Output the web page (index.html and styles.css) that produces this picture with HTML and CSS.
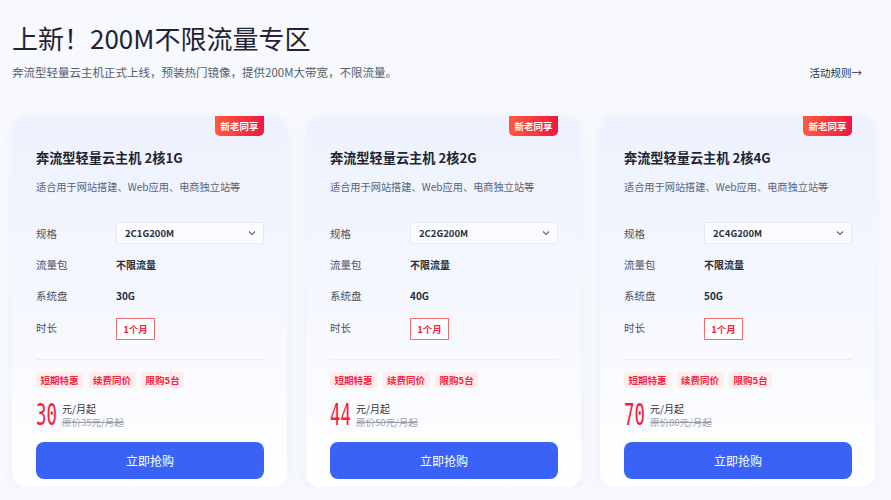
FILE: index.html
```html
<!DOCTYPE html>
<html lang="zh-CN">
<head>
    <meta charset="UTF-8">
    <meta name="viewport" content="width=device-width, initial-scale=1.0">
    <title>上新！200M不限流量专区</title>
    <link rel="stylesheet" href="styles.css">
</head>
<body>

<div class="page">
    <h1>上新！200M不限流量专区</h1>
    <div class="intro">
        <p class="description">奔流型轻量云主机正式上线，预装热门镜像，提供200M大带宽，不限流量。</p>
        <a class="rules" href="#">活动规则→</a>
    </div>

    <div class="cards">
        <!-- 2核1G -->
        <div class="card">
            <span class="badge">新老同享</span>
            <h2>奔流型轻量云主机 2核1G</h2>
            <p class="card-desc">适合用于网站搭建、Web应用、电商独立站等</p>
            <div class="specs">
                <span class="label">规格</span>
                <div class="select">2C1G200M
                    <svg width="8" height="6" viewBox="0 0 8 6"><polyline points="1,1.5 4,4.5 7,1.5" fill="none" stroke="#666" stroke-width="1.1"/></svg>
                </div>
                <span class="label">流量包</span>
                <span class="value">不限流量</span>
                <span class="label">系统盘</span>
                <span class="value">30G</span>
                <span class="label">时长</span>
                <div><span class="duration">1个月</span></div>
            </div>
            <div class="tags">
                <span class="tag">短期特惠</span>
                <span class="tag">续费同价</span>
                <span class="tag">限购5台</span>
            </div>
            <div class="price">
                <span class="amount"><span>30</span></span>
                <div class="price-text">
                    <span class="unit">元/月起</span>
                    <span class="origin">原价35元/月起</span>
                </div>
            </div>
            <button>立即抢购</button>
        </div>

        <!-- 2核2G -->
        <div class="card">
            <span class="badge">新老同享</span>
            <h2>奔流型轻量云主机 2核2G</h2>
            <p class="card-desc">适合用于网站搭建、Web应用、电商独立站等</p>
            <div class="specs">
                <span class="label">规格</span>
                <div class="select">2C2G200M
                    <svg width="8" height="6" viewBox="0 0 8 6"><polyline points="1,1.5 4,4.5 7,1.5" fill="none" stroke="#666" stroke-width="1.1"/></svg>
                </div>
                <span class="label">流量包</span>
                <span class="value">不限流量</span>
                <span class="label">系统盘</span>
                <span class="value">40G</span>
                <span class="label">时长</span>
                <div><span class="duration">1个月</span></div>
            </div>
            <div class="tags">
                <span class="tag">短期特惠</span>
                <span class="tag">续费同价</span>
                <span class="tag">限购5台</span>
            </div>
            <div class="price">
                <span class="amount"><span>44</span></span>
                <div class="price-text">
                    <span class="unit">元/月起</span>
                    <span class="origin">原价50元/月起</span>
                </div>
            </div>
            <button>立即抢购</button>
        </div>

        <!-- 2核4G -->
        <div class="card">
            <span class="badge">新老同享</span>
            <h2>奔流型轻量云主机 2核4G</h2>
            <p class="card-desc">适合用于网站搭建、Web应用、电商独立站等</p>
            <div class="specs">
                <span class="label">规格</span>
                <div class="select">2C4G200M
                    <svg width="8" height="6" viewBox="0 0 8 6"><polyline points="1,1.5 4,4.5 7,1.5" fill="none" stroke="#666" stroke-width="1.1"/></svg>
                </div>
                <span class="label">流量包</span>
                <span class="value">不限流量</span>
                <span class="label">系统盘</span>
                <span class="value">50G</span>
                <span class="label">时长</span>
                <div><span class="duration">1个月</span></div>
            </div>
            <div class="tags">
                <span class="tag">短期特惠</span>
                <span class="tag">续费同价</span>
                <span class="tag">限购5台</span>
            </div>
            <div class="price">
                <span class="amount"><span>70</span></span>
                <div class="price-text">
                    <span class="unit">元/月起</span>
                    <span class="origin">原价80元/月起</span>
                </div>
            </div>
            <button>立即抢购</button>
        </div>
    </div>
</div>

</body>
</html>
```

FILE: styles.css
```css
/* 200M 不限流量专区 */
body { margin: 0; background-color: #f7f9fe; font-family: "Noto Sans CJK SC", "Noto Sans", sans-serif; color: #1f2433; }
.page { padding: 20px 0 0 12px; }

h1 { margin: 0; font-size: 26px; line-height: 36px; font-weight: 400; color: #1f2433; }
.intro { display: flex; justify-content: space-between; align-items: center; margin-top: 7px; padding-right: 29px; height: 18px; }
.description { margin: 0; font-size: 11.5px; line-height: 18px; color: #555d6d; }
.rules { font-size: 10.5px; color: #2c313c; text-decoration: none; }

.cards { display: grid; grid-template-columns: repeat(3, 275px); column-gap: 19px; margin-top: 35px; }
.card { position: relative; height: 371px; box-sizing: border-box; padding: 34px 23px 0 24px; border-radius: 14px; background: linear-gradient(180deg, #edf2fe 0%, #f6f8fe 55%, #ffffff 100%); box-shadow: 0 4px 14px rgba(40, 70, 150, 0.05); display: flex; flex-direction: column; }

.badge { position: absolute; top: 0; right: 23px; width: 49px; height: 20px; line-height: 20px; text-align: center; font-size: 9.5px; font-weight: 700; color: #fff; background: linear-gradient(90deg, #ff5b3f, #f2163f); border-radius: 0 0 5px 5px; }

h2 { margin: 0; font-size: 13.2px; line-height: 16px; font-weight: 700; color: #1f2433; }
.card-desc { margin: 13px 0 0; font-size: 10.2px; line-height: 16px; color: #5a6272; }

.specs { display: grid; grid-template-columns: 80px 1fr; grid-auto-rows: 22px; row-gap: 9.4px; align-items: center; margin-top: 27px; }
.label { font-size: 10.5px; color: #4a5160; }
.value { font-size: 10px; font-weight: 700; color: #262b36; }
.select { height: 22px; box-sizing: border-box; display: flex; align-items: center; justify-content: space-between; padding: 0 7px 0 8px; border: 1px solid #e6eaf2; border-radius: 2px; background-color: #fbfcff; font-size: 9.5px; font-weight: 700; color: #2b303b; }
.duration { display: inline-block; width: 39px; height: 22px; box-sizing: border-box; line-height: 20px; text-align: center; border: 1px solid #f26c6c; background-color: #fff; font-size: 9.5px; font-weight: 700; color: #f0283c; }

.tags { display: flex; gap: 5.5px; margin-top: 21px; padding-top: 12px; border-top: 1px solid #e9ecf3; }
.tag { height: 16px; line-height: 16px; padding: 0 4.5px; border-radius: 3px; background-color: #ffeced; font-size: 9.5px; font-weight: 700; color: #f2263f; }

.price { display: flex; align-items: center; margin-top: 12px; height: 30px; }
.amount { width: 26px; height: 30px; overflow: visible; }
.amount span { display: inline-block; font-family: "DejaVu Sans Mono", monospace; font-size: 30px; line-height: 30px; color: #f5203e; transform: scaleX(0.58); transform-origin: left center; }
.price-text { display: flex; flex-direction: column; gap: 1px; }
.unit { font-size: 10px; line-height: 12px; color: #333; }
.origin { font-size: 9.5px; line-height: 12px; color: #9aa0ab; text-decoration: line-through; }

button { margin-top: 12px; width: 100%; height: 37px; border: none; border-radius: 8px; background-color: #3a62f6; color: #fff; font-family: inherit; font-size: 12px; cursor: pointer; }
button:hover { background-color: #2f55e0; }
```
